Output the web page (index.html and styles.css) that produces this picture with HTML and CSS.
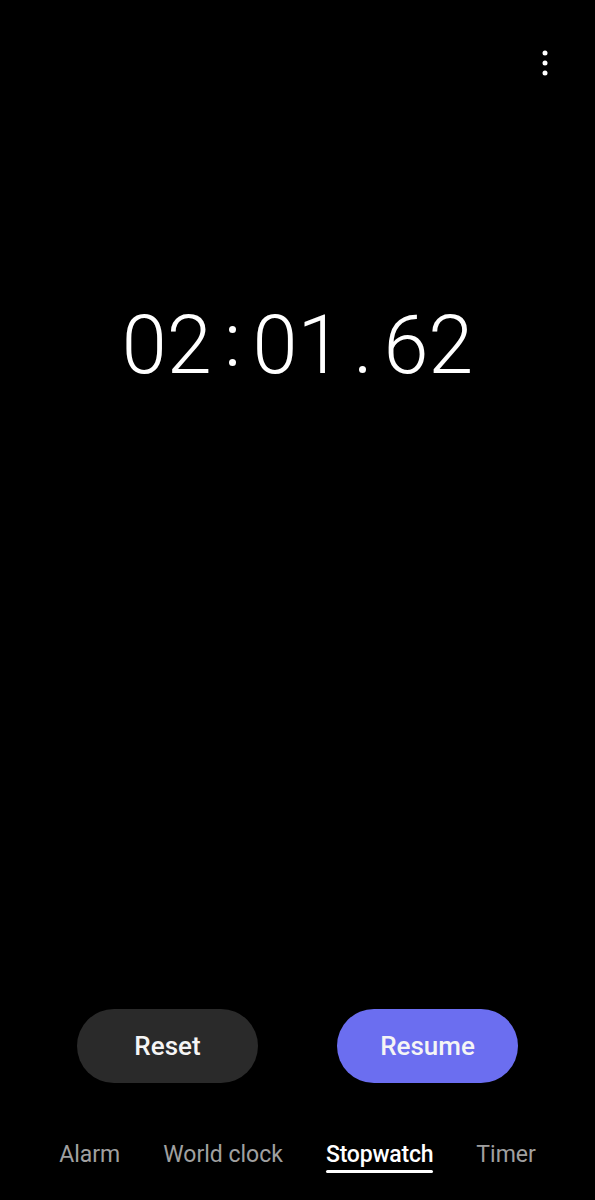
FILE: index.html
```html
<!DOCTYPE html>
<html>
<head>
<meta charset="utf-8">
<link rel="stylesheet" href="styles.css">
</head>
<body>
<div class="app">
  <header class="topbar">
    <svg class="more" width="10" height="30" viewBox="0 0 10 30">
      <circle cx="5" cy="5" r="2.5" fill="#fff"/>
      <circle cx="5" cy="15" r="2.5" fill="#fff"/>
      <circle cx="5" cy="25" r="2.5" fill="#fff"/>
    </svg>
  </header>
  <main class="time">
    <span class="digits">02</span>
    <span class="colon"><i class="dot"></i><i class="dot"></i></span>
    <span class="digits">01</span>
    <span class="period"><i class="dot"></i></span>
    <span class="digits">62</span>
  </main>
  <div class="spacer"></div>
  <div class="buttons">
    <button class="btn reset">Reset</button>
    <button class="btn resume">Resume</button>
  </div>
  <nav class="tabs">
    <span class="tab">Alarm</span>
    <span class="tab">World clock</span>
    <span class="tab active">Stopwatch</span>
    <span class="tab">Timer</span>
  </nav>
</div>
</body>
</html>
```
FILE: styles.css
```css
html, body {
  margin: 0;
  padding: 0;
  background: #000;
}
body {
  font-family: Roboto, "Liberation Sans", sans-serif;
  color: #fff;
}
.app {
  width: 595px;
  height: 1200px;
  display: flex;
  flex-direction: column;
}
.topbar {
  display: flex;
  justify-content: flex-end;
  padding: 48px 45px 0 0;
  height: 30px;
}
.more {
  display: block;
}
.time {
  margin-top: 227px;
  display: flex;
  justify-content: center;
  align-items: center;
  height: 81px;
}
.digits {
  font-size: 81px;
  font-weight: 300;
  line-height: 81px;
  letter-spacing: 0;
}
.colon {
  display: flex;
  flex-direction: column;
  gap: 26px;
  margin: 0 17px;
}
.period {
  align-self: flex-end;
  margin: 0 17px 13px;
}
.dot {
  display: block;
  width: 7px;
  height: 7px;
  border-radius: 50%;
  background: #fff;
}
.spacer {
  flex: 1;
}
.buttons {
  display: flex;
  justify-content: center;
  gap: 79px;
}
.btn {
  width: 181px;
  height: 74px;
  border: 0;
  border-radius: 37px;
  font-family: Roboto, "Liberation Sans", sans-serif;
  font-size: 26px;
  font-weight: 500;
  color: #f5f5f5;
  padding: 0;
}
.reset {
  background: #2a2a2a;
}
.resume {
  background: #6b6ef0;
}
.tabs {
  display: flex;
  justify-content: center;
  gap: 43px;
  margin-top: 58px;
  height: 59px;
}
.tab {
  position: relative;
  font-size: 23px;
  line-height: 27px;
  color: #a0a0a0;
  height: 27px;
  padding-bottom: 5px;
}
.tab.active {
  color: #fff;
  font-weight: 500;
  letter-spacing: -0.2px;
}
.tab.active::after {
  content: "";
  position: absolute;
  left: 0;
  right: 0;
  bottom: 0;
  height: 3px;
  border-radius: 2px;
  background: #fff;
}
```
